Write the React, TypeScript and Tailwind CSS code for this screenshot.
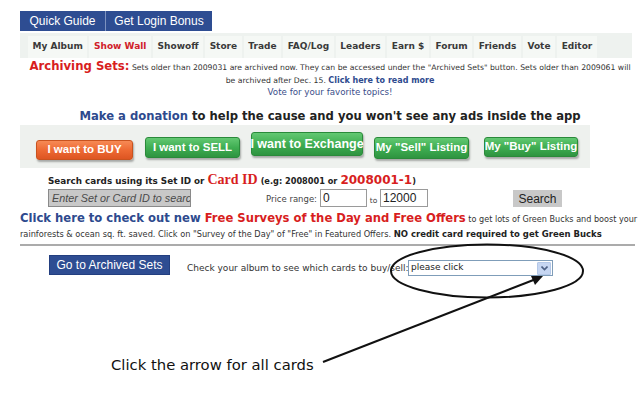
import React from "react";

const tabs = [
  { label: "My Album" },
  { label: "Show Wall", red: true },
  { label: "Showoff" },
  { label: "Store" },
  { label: "Trade" },
  { label: "FAQ/Log" },
  { label: "Leaders" },
  { label: "Earn $" },
  { label: "Forum" },
  { label: "Friends" },
  { label: "Vote" },
  { label: "Editor" },
];

const arial = { fontFamily: '"Liberation Sans", Arial, sans-serif' };

function GlossyButton({
  label,
  orange,
  className = "",
}: {
  label: string;
  orange?: boolean;
  className?: string;
}) {
  return (
    <div
      style={arial}
      className={`flex items-center justify-center whitespace-nowrap rounded-[3px] border font-bold text-white shadow-[1px_2px_2px_rgba(0,0,0,0.3)] ${
        orange
          ? "border-[#c9531f] bg-gradient-to-b from-[#f68a55] via-[#ee6a33] to-[#dd5522]"
          : "border-[#2a8a3a] bg-gradient-to-b from-[#62c872] via-[#3fae52] to-[#2e9440]"
      } ${className}`}
    >
      {label}
    </div>
  );
}

export default function App() {
  return (
    <div
      className="relative h-[415px] w-[640px] overflow-hidden bg-white text-[#222]"
      style={{ fontFamily: '"DejaVu Sans", Verdana, sans-serif' }}
    >
      {/* top blue buttons */}
      <div className="ml-[20px] flex pt-[11px] text-[12px] text-white" style={arial}>
        <div className="flex h-[20px] w-[86px] items-center justify-center border-r border-[#7d92c0] bg-[#2e4d92]">
          Quick Guide
        </div>
        <div className="flex h-[20px] w-[106px] items-center justify-center bg-[#2e4d92]">
          Get Login Bonus
        </div>
      </div>

      {/* nav */}
      <div className="ml-[20px] mt-[2px] flex h-[25px] w-[612px] items-end bg-[#eef2ef] pl-[8px]">
        {tabs.map((t) => (
          <div
            key={t.label}
            className={`mr-[2px] flex h-[22px] items-center whitespace-nowrap bg-[#f5f8f5] px-[4.6px] text-[9px] font-bold ${
              t.red ? "text-[#d0202a]" : "text-[#3a3a3a]"
            }`}
          >
            {t.label}
          </div>
        ))}
      </div>

      {/* archiving notice */}
      <div className="ml-[20px] w-[620px] text-center text-[7.7px] text-[#333]">
        <div className="h-[17px] whitespace-nowrap leading-[17px]">
          <span className="text-[11.7px] font-bold text-[#d81e1e]">Archiving Sets:</span>{" "}
          Sets older than 2009031 are archived now. They can be accessed under the "Archived Sets"
          button. Sets older than 2009061 will
        </div>
        <div className="h-[11px] whitespace-nowrap leading-[11px]">
          be archived after Dec. 15.{" "}
          <span className="text-[8px] font-bold text-[#2e4a8e]">Click here to read more</span>
        </div>
        <div className="h-[12px] text-[8.7px] leading-[12px] text-[#3a4e8a]">Vote for your favorite topics!</div>
      </div>

      {/* donation */}
      <div className="ml-[20px] mt-[10px] h-[16px] w-[620px] whitespace-nowrap text-center text-[11.6px] font-bold leading-[16px]">
        <span className="text-[#2e4a8e]">Make a donation</span>{" "}
        <span className="text-[#222]">to help the cause and you won't see any ads inside the app</span>
      </div>

      {/* buy/sell buttons */}
      <div className="ml-[20px] mt-[1px] flex h-[43px] w-[570px] items-start bg-[#eef1ee] text-[11.5px]">
        <GlossyButton orange label="I want to BUY" className="ml-[16px] mt-[15px] h-[20px] w-[97px]" />
        <GlossyButton label="I want to SELL" className="ml-[12px] mt-[12px] h-[21px] w-[95px]" />
        <GlossyButton label="I want to Exchange" className="ml-[11px] mt-[7px] h-[24px] w-[112px] text-[12.5px]" />
        <GlossyButton label='My "Sell" Listing' className="ml-[11px] mt-[12px] h-[22px] w-[95px]" />
        <GlossyButton label='My "Buy" Listing' className="ml-[15px] mt-[12px] h-[20px] w-[94px]" />
      </div>

      {/* search */}
      <div className="ml-[48px] mt-[5px] flex h-[14px] items-baseline whitespace-nowrap text-[8.8px] font-bold leading-[14px]">
        <span>Search cards using its Set ID or</span>
        <span className="ml-[3px] text-[14px] text-[#d81e1e]" style={{ fontFamily: '"Liberation Serif", serif' }}>
          Card ID
        </span>
        <span className="ml-[3px] text-[8.2px]">(e.g: 2008001 or</span>
        <span className="ml-[3px] text-[12px] text-[#d81e1e]">2008001-1</span>
        <span className="text-[8.2px]">)</span>
      </div>
      <div className="ml-[48px] mt-[2px] flex h-[18px] items-end text-[8.5px]">
        <div
          className="flex h-[18px] w-[143px] items-center overflow-hidden whitespace-nowrap border border-[#8a8a8a] bg-[#c8c8c8] px-[3px] text-[10.8px] italic text-[#4a4a4a]"
          style={arial}
        >
          Enter Set or Card ID to search
        </div>
        <span className="w-[126px] pb-[1px] text-right text-[#444]">Price range:</span>
        <div
          className="ml-[3px] flex h-[18px] w-[47px] items-center border border-[#9a9a9a] px-[2px] text-[12px]"
          style={arial}
        >
          0
        </div>
        <span className="w-[13px] pb-[1px] text-center text-[7.5px] text-[#444]">to</span>
        <div
          className="flex h-[18px] w-[48px] items-center border border-[#9a9a9a] px-[2px] text-[12px]"
          style={arial}
        >
          12000
        </div>
        <div
          className="ml-[85px] flex h-[17px] w-[49px] items-center justify-center bg-[#c8c8c8] text-[12px] text-[#222]"
          style={arial}
        >
          Search
        </div>
      </div>

      {/* surveys */}
      <div className="ml-[20px] mt-[3px] h-[16px] whitespace-nowrap text-[8.1px] leading-[16px] text-[#333]">
        <span className="text-[11.6px] font-bold">
          <span className="text-[#2e4a8e]">Click here to check out new</span>{" "}
          <span className="text-[#d81e1e]">Free Surveys of the Day and Free Offers</span>
        </span>{" "}
        to get lots of Green Bucks and boost your
      </div>
      <div className="ml-[20px] mt-[2px] h-[12px] whitespace-nowrap text-[8.2px] leading-[12px] text-[#333]">
        rainforests &amp; ocean sq. ft. saved. Click on "Survey of the Day" of "Free" in Featured Offers.{" "}
        <span className="text-[8.5px] font-bold text-[#222]">NO credit card required to get Green Bucks</span>
      </div>

      <div className="ml-[20px] mt-[4px] h-[2px] w-[615px] bg-[#ababab]" />

      {/* archived sets */}
      <div className="ml-[49px] mt-[9px] flex h-[20px] items-start">
        <div
          className="flex h-[20px] w-[121px] items-center justify-center border border-[#233f80] bg-[#2e4d92] text-[12px] text-white"
          style={arial}
        >
          Go to Archived Sets
        </div>
        <span className="ml-[17px] mt-[7px] w-[221px] whitespace-nowrap text-[9px] leading-[12px] text-[#333]">
          Check your album to see which cards to buy/sell:
        </span>
        <div className="mt-[5px] flex h-[16px] w-[145px] items-center border border-[#7f9db9] bg-white text-[9px] text-[#222]">
          <span className="flex-1 pl-[2px]">please click</span>
          <div className="mr-[1px] flex h-[13px] w-[14px] items-center justify-center rounded-[1px] border border-[#b4c8e8] bg-[#c6d6f2]">
            <svg width="7" height="5" viewBox="0 0 7 5">
              <path d="M0.5 0.5 L3.5 3.5 L6.5 0.5" fill="none" stroke="#4d6185" strokeWidth="1.6" />
            </svg>
          </div>
        </div>
      </div>

      {/* annotation */}
      <div className="ml-[111px] mt-[81px] text-[14.8px] leading-[18px] text-[#111]">Click the arrow for all cards</div>
      <svg className="pointer-events-none absolute left-0 top-0" width="640" height="415" viewBox="0 0 640 415">
        <ellipse cx="487" cy="271" rx="96" ry="26.5" fill="none" stroke="#111" strokeWidth="2" />
        <line x1="323" y1="362" x2="536" y2="279" stroke="#111" strokeWidth="2" />
        <path d="M543 276 L531 276 L535 285 Z" fill="#111" />
      </svg>
    </div>
  );
}
